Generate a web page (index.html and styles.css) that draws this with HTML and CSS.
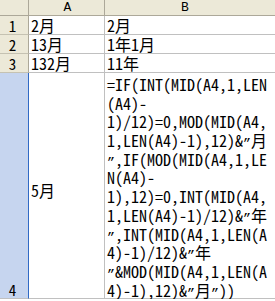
FILE: index.html
```html
<!DOCTYPE html>
<html>
<head>
<meta charset="utf-8">
<link rel="stylesheet" href="styles.css">
</head>
<body>
<div class="sheet">
  <div class="corner"></div>
  <div class="colhead">A</div>
  <div class="colhead colb">B</div>

  <div class="rowhead">1</div>
  <div class="cell">2月</div>
  <div class="cell cellb">2月</div>

  <div class="rowhead">2</div>
  <div class="cell">13月</div>
  <div class="cell cellb">1年1月</div>

  <div class="rowhead">3</div>
  <div class="cell">132月</div>
  <div class="cell cellb">11年</div>

  <div class="rowhead sel tall">4</div>
  <div class="cell mid">5月</div>
  <div class="cell cellb wrap">
    <div class="ln">=IF(INT(MID(A4,1,LEN</div>
    <div class="ln">(A4)-</div>
    <div class="ln">1)/12)=0,MOD(MID(A4,</div>
    <div class="ln">1,LEN(A4)-1),12)&amp;<span class="q">”</span>月</div>
    <div class="ln"><span class="q">”</span>,IF(MOD(MID(A4,1,LE</div>
    <div class="ln">N(A4)-</div>
    <div class="ln">1),12)=0,INT(MID(A4,</div>
    <div class="ln">1,LEN(A4)-1)/12)&amp;<span class="q">”</span>年</div>
    <div class="ln"><span class="q">”</span>,INT(MID(A4,1,LEN(A</div>
    <div class="ln">4)-1)/12)&amp;<span class="q">”</span>年</div>
    <div class="ln"><span class="q">”</span>&amp;MOD(MID(A4,1,LEN(A</div>
    <div class="ln">4)-1),12)&amp;<span class="q">”</span>月<span class="q">”</span>))</div>
  </div>
</div>
</body>
</html>
```

FILE: styles.css
```css
html, body {
  margin: 0;
  padding: 0;
  background: #ffffff;
}

body {
  font-family: "Noto Sans Mono CJK SC", "Liberation Mono", "Noto Sans CJK SC", monospace;
  color: #000000;
  overflow: hidden;
}

.sheet {
  display: grid;
  grid-template-columns: 29px 76px 180px;
  grid-template-rows: 16px 19px 19px 19px 226px;
  width: 285px;
}

.sheet > div {
  box-sizing: border-box;
}

.corner {
  background: #ece9d8;
  border-right: 1px solid #aca899;
  border-bottom: 1px solid #aca899;
}

.colhead {
  background: #ece9d8;
  border-right: 1px solid #aca899;
  border-bottom: 1px solid #aca899;
  display: flex;
  align-items: center;
  justify-content: center;
  font-family: "Liberation Mono", monospace;
  font-size: 13px;
  line-height: 14px;
  padding-left: 2px;
}

.colb {
  border-right: none;
  padding-left: 0;
  padding-right: 20px;
}

.rowhead {
  background: #ece9d8;
  border-right: 1px solid #aca899;
  border-bottom: 1px solid #c5c2b2;
  display: flex;
  align-items: center;
  justify-content: center;
  font-size: 15px;
  line-height: 17px;
  padding-top: 1px;
  padding-right: 3px;
}

.rowhead.sel {
  background: #c6d5ef;
  border-right: 1px solid #316ac5;
  border-bottom: 1px solid #c0c0c0;
  align-items: flex-end;
}

.cell {
  border-right: 1px solid #c0c0c0;
  border-bottom: 1px solid #c0c0c0;
  font-size: 16px;
  line-height: 18px;
  padding-left: 2px;
  display: flex;
  align-items: flex-end;
  white-space: nowrap;
}

.cellb {
  border-right: none;
}

.cell.mid {
  align-items: center;
  padding-top: 8px;
}

.wrap {
  display: block;
  padding-top: 2px;
}

.ln {
  height: 18.7px;
  line-height: 18px;
}

.q {
  font-family: "Liberation Mono", monospace;
  font-size: 13.33px;
}
```
